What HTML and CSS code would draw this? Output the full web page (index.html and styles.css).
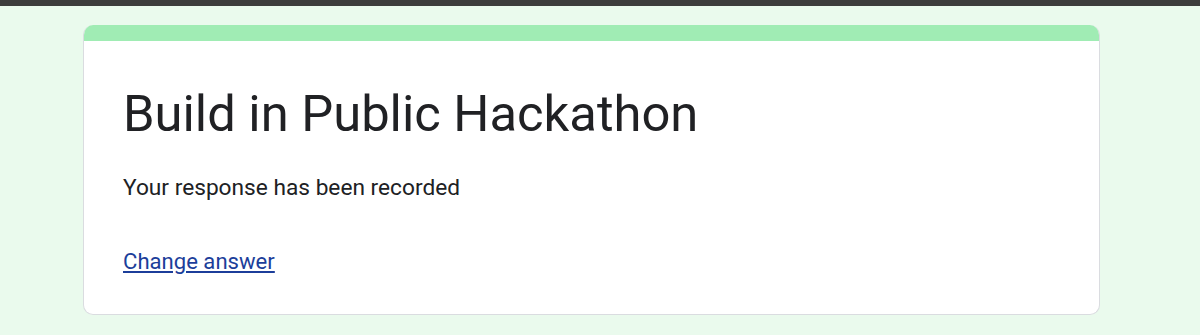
FILE: index.html
```html
<!DOCTYPE html>
<html>
<head>
<meta charset="utf-8">
<link rel="stylesheet" href="styles.css">
</head>
<body>
<div class="topbar"></div>
<main class="page">
  <section class="card">
    <div class="card-accent"></div>
    <div class="card-body">
      <h1 class="title">Build in Public Hackathon</h1>
      <p class="message">Your response has been recorded</p>
      <a class="link" href="#">Change answer</a>
    </div>
  </section>
</main>
</body>
</html>
```

FILE: styles.css
```css
html, body {
  margin: 0;
  padding: 0;
  height: 100%;
}
body {
  background: #eafaed;
  font-family: Roboto, "Noto Sans", Arial, sans-serif;
  color: #202124;
  overflow: hidden;
}
.topbar {
  height: 6px;
  background: #3c3c3c;
}
.page {
  padding: 19px 100px 0 83px;
}
.card {
  background: #fff;
  border: 1px solid #dadce0;
  border-top: none;
  border-radius: 10px;
  overflow: hidden;
}
.card-accent {
  height: 16px;
  background: #a0ecb4;
}
.card-body {
  padding: 43px 39px 39px 39px;
}
.title {
  margin: 0;
  font-weight: 400;
  font-size: 50.7px;
  line-height: 60px;
  color: #202124;
}
.message {
  margin: 30px 0 0 0;
  font-size: 22.7px;
  line-height: 28px;
}
.link {
  display: inline-block;
  margin-top: 45px;
  font-size: 22.1px;
  line-height: 28px;
  color: #1c3e9a;
}
```
